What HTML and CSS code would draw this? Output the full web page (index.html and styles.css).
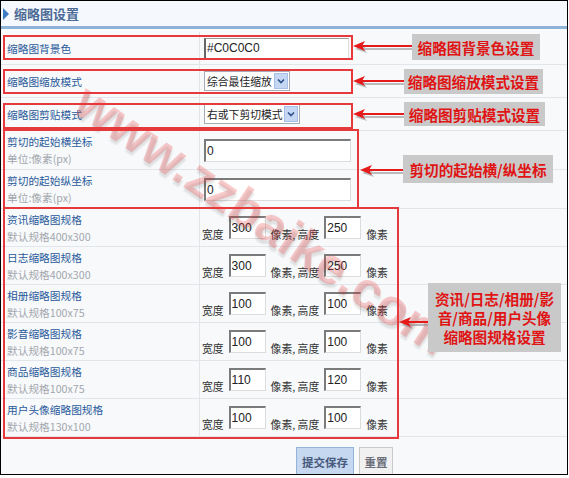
FILE: index.html
```html
<!DOCTYPE html>
<html lang="zh">
<head>
<meta charset="utf-8">
<title>缩略图设置</title>
<link rel="stylesheet" href="styles.css">
</head>
<body>
<div class="frame">
  <div class="header"><span class="tri"></span><h1>缩略图设置</h1></div>
  <div class="table">
    <div class="row">
      <div class="lbl"><div class="t">缩略图背景色</div></div>
      <div class="val"><input class="txt w145" value="#C0C0C0"></div>
    </div>
    <div class="row">
      <div class="lbl"><div class="t">缩略图缩放模式</div></div>
      <div class="val"><div class="sel w86"><span>综合最佳缩放</span><i><svg width="8" height="6" viewBox="0 0 8 6"><path d="M1 1.5 L4 4.5 L7 1.5" fill="none" stroke="#2c4f8c" stroke-width="1.6"/></svg></i></div></div>
    </div>
    <div class="row">
      <div class="lbl"><div class="t">缩略图剪贴模式</div></div>
      <div class="val"><div class="sel w96"><span>右或下剪切模式</span><i><svg width="8" height="6" viewBox="0 0 8 6"><path d="M1 1.5 L4 4.5 L7 1.5" fill="none" stroke="#2c4f8c" stroke-width="1.6"/></svg></i></div></div>
    </div>
    <div class="row two">
      <div class="lbl top"><div class="t">剪切的起始横坐标</div><div class="s">单位:像素(px)</div></div>
      <div class="val"><input class="txt w147" value="0"></div>
    </div>
    <div class="row two">
      <div class="lbl top"><div class="t">剪切的起始纵坐标</div><div class="s">单位:像素(px)</div></div>
      <div class="val"><input class="txt w147" value="0"></div>
    </div>
    <div class="row spec">
      <div class="lbl top"><div class="t">资讯缩略图规格</div><div class="s">默认规格400x300</div></div>
      <div class="val"><span class="u">宽度</span><input class="txt num" value="300"><span class="u">像素, 高度</span><input class="txt num" value="250"><span class="u">像素</span></div>
    </div>
    <div class="row spec">
      <div class="lbl top"><div class="t">日志缩略图规格</div><div class="s">默认规格400x300</div></div>
      <div class="val"><span class="u">宽度</span><input class="txt num" value="300"><span class="u">像素, 高度</span><input class="txt num" value="250"><span class="u">像素</span></div>
    </div>
    <div class="row spec">
      <div class="lbl top"><div class="t">相册缩略图规格</div><div class="s">默认规格100x75</div></div>
      <div class="val"><span class="u">宽度</span><input class="txt num" value="100"><span class="u">像素, 高度</span><input class="txt num" value="100"><span class="u">像素</span></div>
    </div>
    <div class="row spec">
      <div class="lbl top"><div class="t">影音缩略图规格</div><div class="s">默认规格100x75</div></div>
      <div class="val"><span class="u">宽度</span><input class="txt num" value="100"><span class="u">像素, 高度</span><input class="txt num" value="100"><span class="u">像素</span></div>
    </div>
    <div class="row spec">
      <div class="lbl top"><div class="t">商品缩略图规格</div><div class="s">默认规格100x75</div></div>
      <div class="val"><span class="u">宽度</span><input class="txt num" value="110"><span class="u">像素, 高度</span><input class="txt num" value="120"><span class="u">像素</span></div>
    </div>
    <div class="row spec">
      <div class="lbl top"><div class="t">用户头像缩略图规格</div><div class="s">默认规格130x100</div></div>
      <div class="val"><span class="u">宽度</span><input class="txt num" value="100"><span class="u">像素, 高度</span><input class="txt num" value="100"><span class="u">像素</span></div>
    </div>
  </div>
  <div class="actions"><button class="btn primary">提交保存</button><button class="btn reset">重置</button></div>

  <div class="overlay">
    <div class="watermark">www.zzbaike.com</div>
    <div class="rbox rb1"></div>
    <div class="rbox rb2"></div>
    <div class="rbox rb3"></div>
    <div class="rbox rb4"></div>
    <div class="rbox rb5"></div>
    <svg class="arrows" width="566" height="473" viewBox="0 0 566 473">
      <g stroke="#8a8a8a" stroke-width="2" opacity="0.55" fill="#8a8a8a">
        <line x1="356" y1="48" x2="411" y2="48"/><polygon points="354,48 366,44 363,48 366,52" stroke="none"/>
        <line x1="356" y1="83" x2="403" y2="83"/><polygon points="354,83 366,79 363,83 366,87" stroke="none"/>
        <line x1="356" y1="116" x2="403" y2="116"/><polygon points="354,116 366,112 363,116 366,120" stroke="none"/>
        <line x1="363" y1="172" x2="402" y2="172"/><polygon points="361,172 373,168 370,172 373,176" stroke="none"/>
        <line x1="402" y1="324" x2="427" y2="324"/><polygon points="400,324 412,320 409,324 412,328" stroke="none"/>
      </g>
      <g stroke="#e51b1b" stroke-width="2" fill="#e51b1b">
        <line x1="356" y1="45" x2="411" y2="45"/><polygon points="352,45 364,40 361,45 364,50" stroke="none"/>
        <line x1="356" y1="80" x2="403" y2="80"/><polygon points="352,80 364,75 361,80 364,85" stroke="none"/>
        <line x1="356" y1="113" x2="403" y2="113"/><polygon points="352,113 364,108 361,113 364,118" stroke="none"/>
        <line x1="363" y1="169" x2="402" y2="169"/><polygon points="359,169 371,164 368,169 371,174" stroke="none"/>
        <line x1="402" y1="321" x2="427" y2="321"/><polygon points="398,321 410,316 407,321 410,326" stroke="none"/>
      </g>
    </svg>
    <div class="note n1">缩略图背景色设置</div>
    <div class="note n2">缩略图缩放模式设置</div>
    <div class="note n3">缩略图剪贴模式设置</div>
    <div class="note n4">剪切的起始横/纵坐标</div>
    <div class="note n5">资讯/日志/相册/影<br>音/商品/用户头像<br>缩略图规格设置</div>
  </div>
</div>
</body>
</html>
```
FILE: styles.css
```css
body {
  margin: 0;
  background: #fff;
  font-family: "Noto Sans CJK SC", "Noto Sans", sans-serif;
}

.frame {
  position: relative;
  width: 566px;
  height: 473px;
  border: 1px solid #000;
  background: #f7f9fb;
  overflow: hidden;
}

.header {
  height: 25px;
  display: flex;
  align-items: center;
  gap: 5px;
  padding-left: 2px;
  background: #f5f8fc;
  border-bottom: 3px solid #8db4d7;
}

.tri {
  width: 0;
  height: 0;
  border-left: 6px solid #3f7cc4;
  border-top: 6px solid transparent;
  border-bottom: 6px solid transparent;
}

.header h1 {
  margin: 0;
  font-size: 13px;
  font-weight: bold;
  line-height: 16px;
  color: #4b6b96;
}

.table {
  padding-top: 3px;
}

.row {
  display: flex;
  height: 33px;
  box-sizing: border-box;
  border-bottom: 1px solid #e2e6ea;
}

.row.two { height: 39px; }
.row.spec { height: 38px; }

.lbl {
  width: 199px;
  box-sizing: border-box;
  border-right: 1px solid #e2e6ea;
  padding-left: 6px;
  display: flex;
  flex-direction: column;
  justify-content: center;
}

.lbl.top {
  justify-content: flex-start;
  padding-top: 2px;
}

.t {
  color: #2a5a9a;
  font-size: 10.7px;
  line-height: 17px;
  white-space: nowrap;
}

.s {
  color: #a3a7ad;
  font-size: 10.7px;
  line-height: 17px;
  white-space: nowrap;
}

.val {
  flex: 1;
  display: flex;
  align-items: center;
  padding-left: 4px;
}

.spec .val {
  align-items: flex-start;
  padding-top: 7px;
  padding-left: 2px;
  gap: 5px;
}

.u {
  margin-top: 11px;
  line-height: 14px;
  font-size: 10.8px;
  color: #333;
  white-space: nowrap;
}

.txt {
  box-sizing: border-box;
  height: 23px;
  margin: 0;
  border-top: 2px solid #7b7b7b;
  border-left: 2px solid #7b7b7b;
  border-right: 1px solid #dcdcdc;
  border-bottom: 1px solid #dcdcdc;
  background: #fff;
  font: 12px "Liberation Sans", Arial, sans-serif;
  color: #222;
  padding: 0 1px;
  outline: none;
}

.w145 {
  width: 145px;
  height: 21px;
  border-top: 1px solid #9a9a9a;
  border-left: 2px solid #666;
}

.w147 { width: 147px; }
.num { width: 37px; }

.sel {
  display: flex;
  align-items: center;
  justify-content: space-between;
  height: 20px;
  box-sizing: border-box;
  border: 1px solid #a5acb5;
  background: #fff;
}

.w86 { width: 86px; }
.w96 { width: 96px; }

.sel span {
  padding-left: 2px;
  font-size: 10.8px;
  color: #222;
  white-space: nowrap;
}

.sel i {
  width: 14px;
  height: 16px;
  margin-right: 1px;
  box-sizing: border-box;
  background: #c5d7f2;
  border: 1px solid #a6bfe6;
  display: flex;
  align-items: center;
  justify-content: center;
}

.actions {
  display: flex;
  gap: 5px;
  padding: 10px 0 0 295px;
}

.btn {
  height: 29px;
  margin: 0;
  padding: 0;
  font-family: "Noto Sans CJK SC", sans-serif;
  font-weight: bold;
  font-size: 11.5px;
  border: 1px solid #c9c9c9;
  background: #f1f1f1;
  color: #6a6f7a;
}

.btn.primary {
  width: 58px;
  background: #c5d8ef;
  border-color: #93b3d8;
  color: #485a7e;
}

.btn.reset { width: 34px; }

/* annotation layer drawn over the form */
.overlay {
  position: absolute;
  inset: 0;
  pointer-events: none;
}

.watermark {
  position: absolute;
  left: 262px;
  top: 218px;
  transform: translate(-50%, -50%) rotate(34deg);
  font: bold 52px "Liberation Sans", Arial, sans-serif;
  line-height: 1;
  white-space: nowrap;
  color: rgba(236, 70, 70, 0.28);
  text-shadow: 2px 3px 2px rgba(0, 0, 0, 0.10);
}

.rbox {
  position: absolute;
  border: 2px solid #e6393c;
  box-sizing: border-box;
}

.rb1 { left: 2px; top: 34px; width: 350px; height: 25px; }
.rb2 { left: 2px; top: 68px; width: 350px; height: 25px; }
.rb3 { left: 2px; top: 102px; width: 350px; height: 26px; }
.rb4 { left: 2px; top: 128px; width: 356px; height: 80px; }
.rb5 { left: 2px; top: 206px; width: 396px; height: 232px; }

.arrows {
  position: absolute;
  left: 0;
  top: 0;
}

.note {
  position: absolute;
  background: #c9c9c9;
  color: #e01414;
  font-family: "Noto Sans CJK SC", sans-serif;
  font-weight: bold;
  font-size: 14.6px;
  line-height: 19px;
  display: flex;
  align-items: center;
  justify-content: center;
  text-align: center;
  white-space: nowrap;
}

.n1 { left: 411px; top: 33px; width: 128px; height: 26px; }
.n2 { left: 403px; top: 68px; width: 139px; height: 25px; }
.n3 { left: 403px; top: 101px; width: 141px; height: 24px; }
.n4 { left: 402px; top: 154px; width: 150px; height: 28px; }
.n5 { left: 427px; top: 282px; width: 133px; height: 69px; }
```
